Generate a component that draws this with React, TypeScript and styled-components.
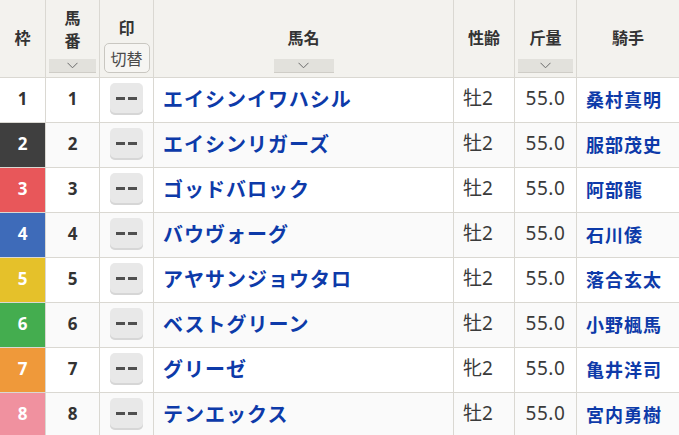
import React from "react";
import styled, { createGlobalStyle } from "styled-components";

const Global = createGlobalStyle`
  html, body { margin: 0; padding: 0; background: #ffffff; }
  body { font-family: "Noto Sans", "Noto Sans CJK JP", sans-serif; }
`;

const Table = styled.div`
  display: grid;
  grid-template-columns: 45px 53px 53px 299px 60px 61px 1fr;
  grid-auto-rows: 44px;
  grid-template-rows: 77px;
  gap: 1px;
  background: #dad8d2;
  width: 679px;
`;

const HeadCell = styled.div<{ $end?: boolean }>`
  background: #f3f2ee;
  display: flex;
  flex-direction: column;
  align-items: center;
  justify-content: ${(p) => (p.$end ? "flex-end" : "center")};
  padding-bottom: ${(p) => (p.$end ? "4px" : "2px")};
  box-sizing: border-box;
`;

const HeadLabel = styled.div<{ $mb?: number }>`
  font-family: "Noto Sans CJK JP", sans-serif;
  font-weight: 700;
  font-size: 16px;
  line-height: 23px;
  color: #333;
  text-align: center;
  margin-bottom: ${(p) => p.$mb ?? 0}px;
`;

const SortButton = styled.div<{ $w: number }>`
  width: ${(p) => p.$w}px;
  height: 14px;
  background: #e2e1dc;
  border-bottom: 1px solid #cfcdc7;
  box-sizing: border-box;
  display: flex;
  align-items: center;
  justify-content: center;
`;

const SwitchButton = styled.div`
  width: 46px;
  height: 30px;
  box-sizing: border-box;
  border: 1px solid #c9c7c1;
  border-radius: 5px;
  background: #f6f5f2;
  display: flex;
  align-items: center;
  justify-content: center;
  font-family: "Noto Sans CJK JP", sans-serif;
  font-size: 16px;
  color: #4a4a4a;
`;

const Cell = styled.div<{ $alt?: boolean; $align?: "center" | "left" }>`
  background: ${(p) => (p.$alt ? "#fafafa" : "#ffffff")};
  display: flex;
  align-items: center;
  justify-content: ${(p) => (p.$align === "left" ? "flex-start" : "center")};
  padding-left: ${(p) => (p.$align === "left" ? "9px" : "0")};
  padding-bottom: 3px;
  box-sizing: border-box;
  overflow: hidden;
  white-space: nowrap;
`;

const FrameCell = styled.div<{ $bg: string; $fg: string }>`
  background: ${(p) => p.$bg};
  color: ${(p) => p.$fg};
  display: flex;
  align-items: center;
  justify-content: center;
  padding-bottom: 3px;
  box-sizing: border-box;
  font-family: "Noto Sans", sans-serif;
  font-weight: 700;
  font-size: 17px;
  line-height: 1;
`;

const Num = styled.span`
  font-family: "Noto Sans", sans-serif;
  font-weight: 700;
  font-size: 17px;
  line-height: 1;
  color: #333;
`;

const MarkButton = styled.div`
  width: 33px;
  height: 32px;
  border-radius: 5px;
  background: #e8e8e8;
  box-shadow: inset 0 -2px 0 #d6d6d6;
  display: flex;
  align-items: center;
  justify-content: center;
  gap: 3px;
`;

const Dash = styled.span`
  display: block;
  width: 9px;
  height: 3px;
  background: #4f4f4f;
`;

const HorseName = styled.span`
  font-family: "Noto Sans CJK JP", sans-serif;
  font-weight: 700;
  font-size: 20px;
  line-height: 1;
  letter-spacing: 1px;
  color: #0d3aa9;
`;

const Jockey = styled.span`
  font-family: "Noto Sans CJK JP", sans-serif;
  font-weight: 700;
  font-size: 18px;
  line-height: 1;
  letter-spacing: 1px;
  color: #0d3aa9;
`;

const Plain = styled.span`
  font-family: "Noto Sans", "Noto Sans CJK JP", sans-serif;
  font-size: 19px;
  line-height: 1;
  color: #3a3a3a;
`;

const Weight = styled(Plain)`
  letter-spacing: 0.6px;
`;

const Chevron = () => (
  <svg width="11" height="7" viewBox="0 0 11 7">
    <polyline points="0.5,0.8 5.5,5.8 10.5,0.8" fill="none" stroke="#6a6a6a" strokeWidth="1" />
  </svg>
);

type Row = { waku: number; uma: number; name: string; sex: string; kin: string; jockey: string };

const rows: Row[] = [
  { waku: 1, uma: 1, name: "エイシンイワハシル", sex: "牡2", kin: "55.0", jockey: "桑村真明" },
  { waku: 2, uma: 2, name: "エイシンリガーズ", sex: "牡2", kin: "55.0", jockey: "服部茂史" },
  { waku: 3, uma: 3, name: "ゴッドバロック", sex: "牡2", kin: "55.0", jockey: "阿部龍" },
  { waku: 4, uma: 4, name: "バウヴォーグ", sex: "牡2", kin: "55.0", jockey: "石川倭" },
  { waku: 5, uma: 5, name: "アヤサンジョウタロ", sex: "牡2", kin: "55.0", jockey: "落合玄太" },
  { waku: 6, uma: 6, name: "ベストグリーン", sex: "牡2", kin: "55.0", jockey: "小野楓馬" },
  { waku: 7, uma: 7, name: "グリーゼ", sex: "牝2", kin: "55.0", jockey: "亀井洋司" },
  { waku: 8, uma: 8, name: "テンエックス", sex: "牡2", kin: "55.0", jockey: "宮内勇樹" },
];

const frameColors: Record<number, [string, string]> = {
  1: ["#ffffff", "#333333"],
  2: ["#3f3f3f", "#ffffff"],
  3: ["#e8575a", "#ffffff"],
  4: ["#3e6bb9", "#ffffff"],
  5: ["#e5c12a", "#ffffff"],
  6: ["#44ad4f", "#ffffff"],
  7: ["#ef993a", "#ffffff"],
  8: ["#f0919f", "#ffffff"],
};

export default function App() {
  return (
    <>
      <Global />
      <Table>
        <HeadCell>
          <HeadLabel>枠</HeadLabel>
        </HeadCell>
        <HeadCell $end>
          <HeadLabel $mb={7}>
            馬<br />番
          </HeadLabel>
          <SortButton $w={47}>
            <Chevron />
          </SortButton>
        </HeadCell>
        <HeadCell $end>
          <HeadLabel $mb={4}>印</HeadLabel>
          <SwitchButton>切替</SwitchButton>
        </HeadCell>
        <HeadCell $end>
          <HeadLabel $mb={10}>馬名</HeadLabel>
          <SortButton $w={60}>
            <Chevron />
          </SortButton>
        </HeadCell>
        <HeadCell>
          <HeadLabel>性齢</HeadLabel>
        </HeadCell>
        <HeadCell $end>
          <HeadLabel $mb={10}>斤量</HeadLabel>
          <SortButton $w={55}>
            <Chevron />
          </SortButton>
        </HeadCell>
        <HeadCell>
          <HeadLabel>騎手</HeadLabel>
        </HeadCell>

        {rows.map((r, i) => {
          const alt = i % 2 === 1;
          const [bg, fg] = frameColors[r.waku];
          return (
            <React.Fragment key={r.uma}>
              <FrameCell $bg={bg} $fg={fg}>{r.waku}</FrameCell>
              <Cell $alt={alt}>
                <Num>{r.uma}</Num>
              </Cell>
              <Cell $alt={alt}>
                <MarkButton>
                  <Dash />
                  <Dash />
                </MarkButton>
              </Cell>
              <Cell $alt={alt} $align="left">
                <HorseName>{r.name}</HorseName>
              </Cell>
              <Cell $alt={alt} $align="left">
                <Plain>{r.sex}</Plain>
              </Cell>
              <Cell $alt={alt}>
                <Weight>{r.kin}</Weight>
              </Cell>
              <Cell $alt={alt} $align="left">
                <Jockey>{r.jockey}</Jockey>
              </Cell>
            </React.Fragment>
          );
        })}
      </Table>
    </>
  );
}
